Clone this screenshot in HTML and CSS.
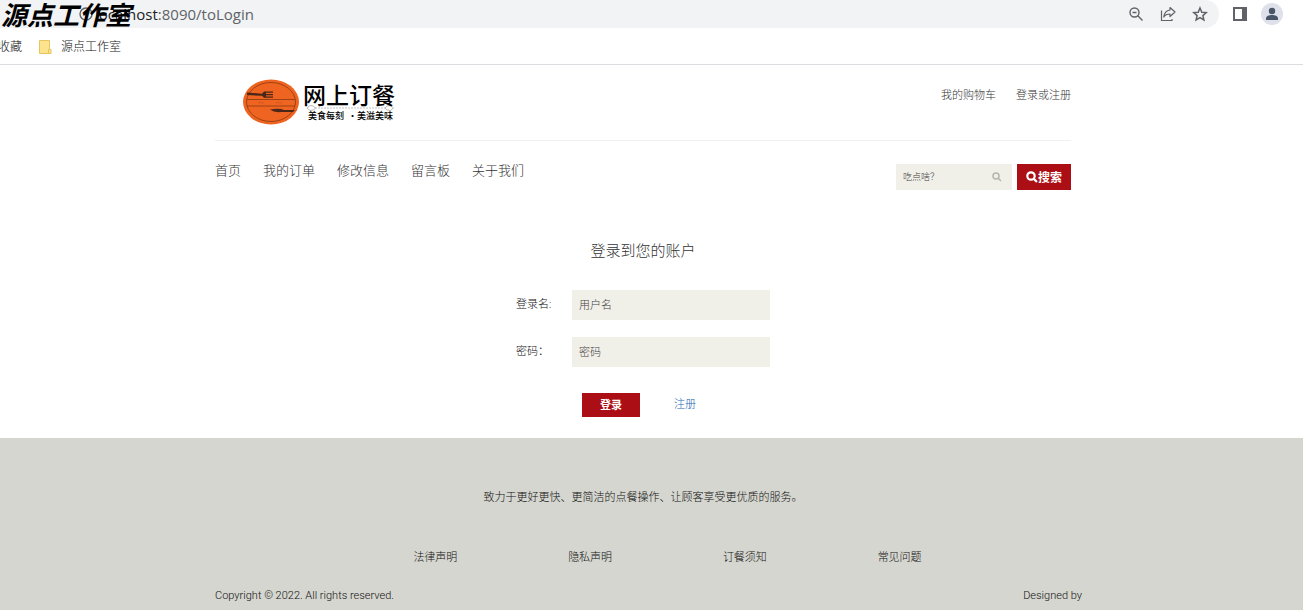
FILE: index.html
```
<!DOCTYPE html>
<html lang="zh-CN">
<head>
    <meta charset="UTF-8">
    <meta name="viewport" content="width=device-width, initial-scale=1.0">
    <title>网上订餐</title>
    <link rel="stylesheet" href="styles.css">
</head>
<body>

    <!-- 浏览器工具栏 -->
    <div class="browser">
        <div class="toolbar">
            <div class="address">
                <svg width="14" height="14" viewBox="0 0 14 14" fill="none" stroke="#5f6368" stroke-width="1.4"><circle cx="7" cy="7" r="6"/><path d="M7 6v4M7 3.5v1.3"/></svg>
                <span class="url"><b>localhost</b>:8090/toLogin</span>
                <svg width="16" height="16" viewBox="0 0 16 16" fill="none" stroke="#5f6368" stroke-width="1.4"><circle cx="6.5" cy="6.5" r="4.5"/><path d="M9.800 9.800L14.500 14.500M4.500 6.500h4"/></svg>
                <svg width="16" height="16" viewBox="0 0 16 16" fill="none" stroke="#5f6368" stroke-width="1.2"><path d="M1.5 4.500v10h10.500V13"/><path d="M10 1.5L15 6l-5 4.5V8C7 8 5 9 3.800 11 4.200 7 6.500 4.500 10 4z" stroke-linejoin="round"/></svg>
                <svg width="16" height="16" viewBox="0 0 16 16" fill="none" stroke="#5f6368" stroke-width="1.5"><path d="M8 2l1.800 4.200 4.500.4-3.400 3 1 4.400L8 11.700 4.100 14l1-4.400-3.400-3 4.500-.4z"/></svg>
            </div>
            <svg width="14" height="14" viewBox="0 0 14 14"><path fill="#5f6368" d="M0 0h14v14H0z"/><path fill="#fff" d="M2 2h7v10H2z"/></svg>
            <svg width="22" height="22" viewBox="0 0 22 22" fill="#4a5568"><circle cx="11" cy="11" r="11" fill="#dee1e9"/><circle cx="11" cy="8" r="3.200"/><path d="M5 17v-1.500c0-2.500 3-3.500 6-3.500s6 1 6 3.500V17z"/></svg>
        </div>
        <div class="bookmarks">
            <span>收藏</span>
            <svg width="13" height="14" viewBox="0 0 13 14"><path fill="#fde38d" stroke="#e6c65c" d="M.5.500h10v9h1.500v4H.5z"/><path fill="none" stroke="#e6c65c" d="M9.500 13V9.500h1"/></svg>
            <span>源点工作室</span>
        </div>
        <div class="watermark">源点工作室</div>
    </div>

    <div class="page">
        <div class="container">
            <div class="header">
                <a href="#" class="logo" aria-label="网上订餐">
                    <svg width="160" height="46" viewBox="0 0 160 46">
                        <ellipse cx="28" cy="23" rx="28" ry="22.500" fill="#ee6420"/>
                        <ellipse cx="28" cy="23" rx="24.500" ry="19.500" fill="none" stroke="#8a3a10" stroke-width=".8"/>
                        <path d="M4 20.500h48M4 27h48" stroke="#8a3a10" stroke-width=".8"/>
                        <path d="M15 23.700h6M33 23.700h6" stroke="#c4521b" stroke-width=".6"/>
                        <path d="M4 13.500l15 1.200 2-2.200h9v1.200h-7v1.300h7v1.200h-7v1.300h7v1.200h-9l-2-2-15-.6z" fill="#4a2718"/>
                        <path d="M27 30.500q10-1.500 14 .5h11l-2 2H38q-7 .7-11-2.500z" fill="#4a2718"/>
                        <path d="M72 29h70" stroke="#999" stroke-width=".6" stroke-dasharray="2 1"/>
                        <path d="M64 29l3-2.500 3.500.5 2 2-2 2-3.500.5zM142 29l2-2 3.500-.5 3 2.500-3 2.500-3.500-.5z" fill="#fff" stroke="#999" stroke-width=".7"/>
                        <text class="logo-name" x="60" y="25">网上订餐</text>
                        <text class="logo-sub" x="65" y="40">美食每刻</text>
                        <text class="logo-sub" x="105" y="40">·美滋美味</text>
                    </svg>
                </a>
                <div class="account">
                    <a href="#">我的购物车</a>
                    <a href="#">登录或注册</a>
                </div>
            </div>

            <div class="navbar">
                <nav class="menu">
                    <a href="#">首页</a>
                    <a href="#">我的订单</a>
                    <a href="#">修改信息</a>
                    <a href="#">留言板</a>
                    <a href="#">关于我们</a>
                </nav>
                <form class="search">
                    <div class="search-box">
                        <input type="text" placeholder="吃点啥？" aria-label="搜索">
                        <svg width="10" height="10" viewBox="0 0 10 10" fill="none" stroke="#b5b5b0" stroke-width="1.500"><circle cx="4" cy="4" r="3"/><path d="M6.200 6.200L9 9"/></svg>
                    </div>
                    <button type="button"><svg width="12" height="12" viewBox="0 0 12 12" fill="none" stroke="#fff" stroke-width="2.200"><circle cx="5" cy="5" r="3.700"/><path d="M7.600 7.600L11 11"/></svg>搜索</button>
                </form>
            </div>

            <form class="login">
                <h3>登录到您的账户</h3>
                <div class="field">
                    <label for="username">登录名:</label>
                    <input type="text" id="username" placeholder="用户名">
                </div>
                <div class="field">
                    <label for="password">密码：</label>
                    <input type="password" id="password" placeholder="密码">
                </div>
                <div class="actions">
                    <button type="button">登录</button>
                    <a href="#">注册</a>
                </div>
            </form>
        </div>
    </div>

    <footer class="footer">
        <div class="container">
            <p class="slogan">致力于更好更快、更简洁的点餐操作、让顾客享受更优质的服务。</p>
            <div class="links">
                <a href="#">法律声明</a>
                <a href="#">隐私声明</a>
                <a href="#">订餐须知</a>
                <a href="#">常见问题</a>
            </div>
            <div class="copyright">
                <span>Copyright © 2022. All rights reserved.</span>
                <span>Designed by</span>
            </div>
        </div>
    </footer>

</body>
</html>
```
FILE: styles.css
```
* {
    box-sizing: border-box;
}

body {
    margin: 0;
    background-color: #fff;
    font-family: Roboto, "Noto Sans CJK SC", sans-serif;
    font-size: 11px;
    font-weight: 300;
    line-height: 16px;
    color: #111;
}

a {
    color: inherit;
    text-decoration: none;
}

svg {
    display: block;
    flex: none;
}

input, button {
    border: none;
    border-radius: 0;
    font-family: inherit;
    font-size: 11px;
    font-weight: 300;
}

input {
    background-color: #f0efe8;
    color: #444;
    outline: none;
}

input::placeholder {
    color: #444;
}

button {
    background-color: #ab0f15;
    color: #fff;
    font-weight: 700;
    cursor: pointer;
}

/* browser */
.browser {
    position: relative;
    height: 65px;
    border-bottom: 1px solid #dadce0;
    font-family: "Open Sans", "Noto Sans CJK SC", sans-serif;
}

.toolbar {
    display: flex;
    align-items: center;
    gap: 14px;
    height: 28px;
    padding-right: 20px;
}

.address {
    flex: 1;
    display: flex;
    align-items: center;
    gap: 16px;
    height: 28px;
    padding: 0 11px 0 79px;
    border-radius: 0 14px 14px 0;
    background-color: #f1f3f4;
}

.url {
    flex: 1;
    margin-left: -14px;
    font-size: 15px;
    font-weight: 400;
    color: #5f6368;
}

.url b {
    font-weight: 400;
    color: #202124;
}

.bookmarks {
    display: flex;
    align-items: center;
    gap: 9px;
    height: 38px;
    margin-left: -2px;
    font-size: 12px;
    color: #111;
}

.bookmarks svg {
    margin-left: 8px;
}

.watermark {
    position: absolute;
    top: 0;
    left: 0;
    padding-left: 1px;
    font-size: 26px;
    line-height: 30px;
    font-weight: 700;
    font-style: italic;
    color: #000;
}

/* page */
.page, .footer {
    padding-right: 17px;
}

.container {
    max-width: 856px;
    margin: 0 auto;
}

.header {
    display: flex;
    justify-content: space-between;
    height: 76px;
    padding: 14px 0 0 28px;
    border-bottom: 1px solid #f0f0f0;
}

.logo svg {
    overflow: visible;
}

.logo-name {
    font-family: "Noto Sans CJK SC", sans-serif;
    font-size: 23px;
    font-weight: 500;
}

.logo-sub {
    font-family: "Noto Sans CJK SC", sans-serif;
    font-size: 9px;
    font-weight: 500;
}

.account {
    display: flex;
    gap: 20px;
    padding-top: 9px;
    color: #333;
}

.navbar {
    display: flex;
    justify-content: space-between;
    align-items: flex-start;
    padding-top: 23px;
}

.menu {
    display: flex;
    gap: 22px;
    font-size: 13px;
    line-height: 14px;
    color: #333;
}

.search {
    display: flex;
    gap: 5px;
}

.search-box {
    display: flex;
    align-items: center;
    width: 116px;
    height: 26px;
    padding: 0 10px 0 7px;
    background-color: #f0efe8;
}

.search input {
    width: 100%;
    min-width: 0;
    padding: 0;
    font-size: 9px;
}

.search button {
    display: flex;
    align-items: center;
    justify-content: center;
    width: 54px;
    height: 26px;
    padding: 0 0 1px;
    font-size: 12px;
}

.login {
    width: 254px;
    margin: 0 auto;
    padding: 51px 0 21px;
}

.login h3 {
    margin: 0 0 29px;
    font-size: 15px;
    font-weight: 300;
    line-height: 20px;
    text-align: center;
    color: #333;
}

.field {
    display: flex;
    align-items: center;
    justify-content: space-between;
    margin-bottom: 17px;
}

.field input {
    width: 198px;
    height: 30px;
    padding: 0 7px;
}

.actions {
    display: flex;
    align-items: center;
    gap: 34px;
    padding: 9px 0 0 66px;
}

.actions button {
    width: 58px;
    height: 24px;
    padding: 0 0 2px;
}

.actions a {
    color: #1467ad;
}

/* footer */
.footer {
    padding-top: 52px;
    padding-bottom: 6px;
    background-color: #d5d6cf;
}

.slogan {
    margin: 0 0 44px;
    text-align: center;
}

.links {
    display: grid;
    grid-template-columns: repeat(4, 1fr);
    padding: 0 94px 0 143px;
    text-align: center;
}

.copyright {
    display: flex;
    justify-content: space-between;
    margin: 22px -11px 0 0;
}
```
